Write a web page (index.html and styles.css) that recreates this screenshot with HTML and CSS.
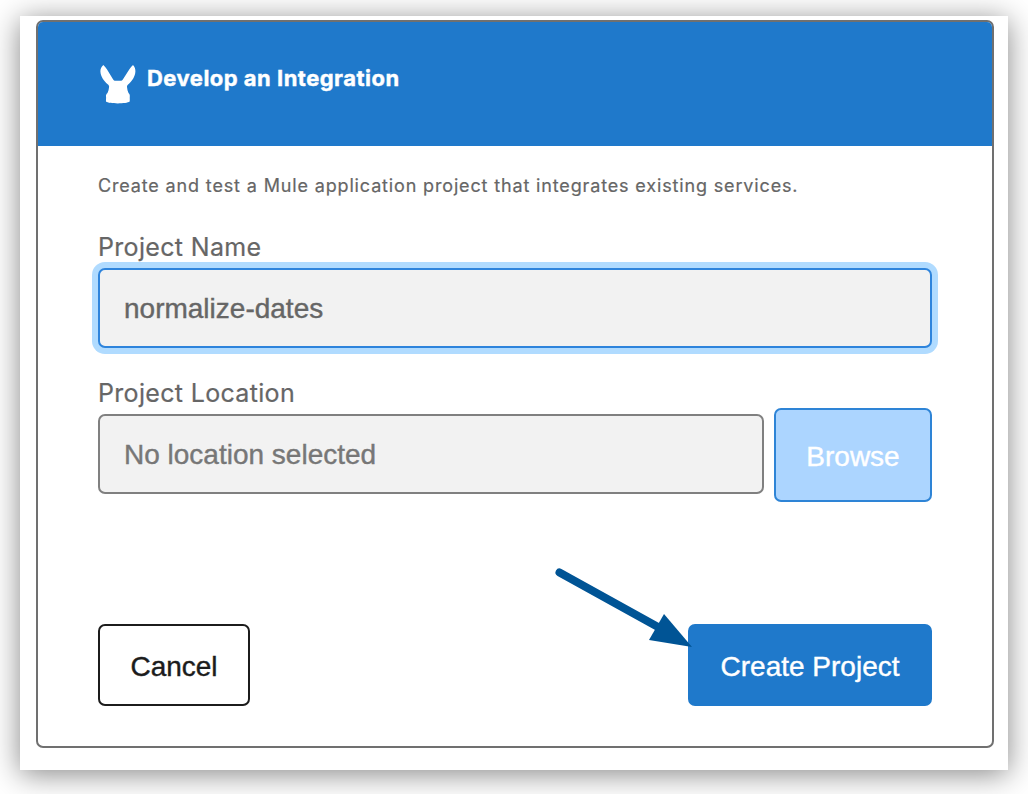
FILE: index.html
```html
<!DOCTYPE html>
<html lang="en">
<head>
<meta charset="utf-8">
<title>Develop an Integration</title>
<link rel="stylesheet" href="styles.css">
</head>
<body>
<main class="sheet">
  <form class="dialog">
    <header class="dialog-header">
      <svg class="logo" width="36" height="40" viewBox="0 0 36 40" fill="#fff"><path d="M3.300 0C1.300 1.800.3 4 .4 6.500c.3 5.500 3.600 9.500 7.600 13 .8.7 1.200 1.500 1.100 2.500-.2 2.300-.8 4.300-1.600 6-1.200 1-1.700 2.200-1.500 3.500.3 1.500-.2 3 0 5 3 2.500 20.500 2.500 23.700 0 .3-2-.1-3.500.1-5 .2-1.500-.3-2.500-1.300-3.500-.8-1.700-1.300-3.700-1.500-6-.1-1 .3-1.800 1.100-2.500 4-3.500 7-7.500 7.300-13C35.500 4 34.800 1.800 33 0c-1.400 1.100-2.500 2.600-3.600 4.300L23 14.300c-.7 1-1.500 1.500-2.500 1.500h-5c-1 0-1.800-.5-2.500-1.500L6.900 4.300C5.800 2.600 4.700 1.100 3.300 0z"/></svg>
      <h1 class="title">Develop an Integration</h1>
    </header>
    <div class="dialog-body">
      <p class="intro">Create and test a Mule application project that integrates existing services.</p>
      <div class="field">
        <label class="label label-name">Project Name</label>
        <div class="input focused">normalize-dates</div>
      </div>
      <div class="field location">
        <label class="label label-location">Project Location</label>
        <div class="picker">
          <div class="input placeholder">No location selected</div>
          <button class="button browse" type="button">Browse</button>
        </div>
      </div>
      <footer class="actions">
        <button class="button cancel" type="button">Cancel</button>
        <button class="button create" type="button">Create Project</button>
      </footer>
    </div>
  </form>
</main>
<svg class="pointer" width="140" height="84" viewBox="0 0 140 84"><path d="M7.500 7.500L106 62" stroke="#005495" stroke-width="8" stroke-linecap="round"/><path d="M112 49L140 82L97 75z" fill="#005495"/></svg>
</body>
</html>
```

FILE: styles.css
```css
* { box-sizing: border-box; }
body {
  margin: 0;
  padding: 16px 20px 24px;
  height: 794px;
  overflow: hidden;
  background: #fff;
  font-family: Inter, "Liberation Sans", sans-serif;
  color: #666;
}
.sheet {
  height: 754px;
  padding: 4px 14px 22px 16px;
  background: #fff;
  box-shadow: 0 4px 28px rgba(0, 0, 0, .48);
}
.dialog {
  height: 728px;
  border: 2px solid #707070;
  border-radius: 7px;
  overflow: hidden;
}
.dialog-header {
  display: flex;
  height: 124px;
  padding: 43px 62px 0;
  background: #1f79cb;
}
.logo { flex: none; }
.title {
  margin: 0 0 0 11px;
  font-size: 22px;
  line-height: 27px;
  font-weight: 700;
  letter-spacing: .48px;
  color: #fff;
  white-space: nowrap;
  -webkit-text-stroke: .4px currentColor;
}
.dialog-body { padding: 27px 60px 0; }
.intro {
  margin: 0;
  height: 59px;
  font-size: 18px;
  line-height: 26px;
  letter-spacing: .85px;
  white-space: nowrap;
  -webkit-text-stroke: .2px currentColor;
}
.field { display: flex; flex-direction: column; }
.location { margin-top: 30px; }
.label {
  height: 36px;
  font-size: 25px;
  line-height: 30px;
  letter-spacing: .33px;
  white-space: nowrap;
  -webkit-text-stroke: .2px currentColor;
}
.input {
  flex: 1;
  height: 80px;
  min-height: 80px;
  padding: 2px 24px 0;
  border: 2px solid #808080;
  border-radius: 7px;
  background: #f2f2f2;
  font: 28px/74px "Liberation Sans", sans-serif;
  -webkit-text-stroke: .4px currentColor;
}
.focused {
  border-color: #2e84dc;
  box-shadow: 0 0 0 6px #b0dbff;
}
.placeholder { color: #777; }
.picker {
  display: flex;
  align-items: flex-start;
  gap: 10px;
}
.button {
  border: 2px solid #1f79cb;
  border-radius: 7px;
  padding: 3px 0 0;
  font: 28px "Liberation Sans", sans-serif;
  background: #1f79cb;
  color: #fff;
  -webkit-text-stroke: .4px currentColor;
}
.browse {
  width: 158px;
  height: 94px;
  margin-top: -6px;
  border-color: #2e84d6;
  background: #acd5ff;
}
.actions {
  display: flex;
  justify-content: space-between;
  margin-top: 122px;
}
.cancel {
  width: 152px;
  height: 82px;
  border-color: #1c1c1c;
  background: #fff;
  color: #1c1c1c;
}
.create { width: 244px; height: 82px; }
.pointer {
  position: absolute;
  left: 552px;
  top: 565px;
}
```
